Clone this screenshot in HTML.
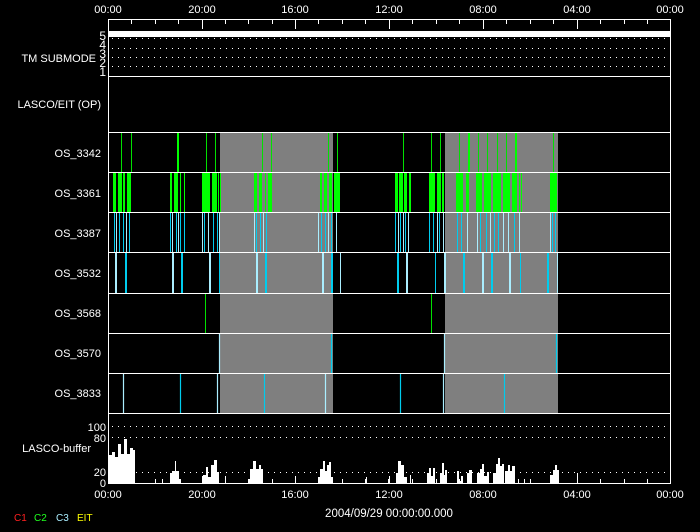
<!DOCTYPE html>
<html><head><meta charset="utf-8"><style>
html,body{margin:0;padding:0;background:#000;}
svg{display:block}
text{font-family:"Liberation Sans",sans-serif;font-size:11px;fill:#fff}
</style></head><body>
<svg width="700" height="532" viewBox="0 0 700 532" xmlns="http://www.w3.org/2000/svg">
<rect width="700" height="532" fill="#000"/>
<rect x="220" y="132" width="113" height="281" fill="#7f7f7f"/>
<rect x="445" y="132" width="113" height="281" fill="#7f7f7f"/>

<g text-anchor="middle" style="font-size:11.5px">
<text x="108" y="13">00:00</text><text x="202" y="13">20:00</text><text x="295" y="13">16:00</text>
<text x="389" y="13">12:00</text><text x="483" y="13">08:00</text><text x="577" y="13">04:00</text><text x="670" y="13">00:00</text>
<text x="108" y="498">00:00</text><text x="202" y="498">20:00</text><text x="295" y="498">16:00</text>
<text x="389" y="498">12:00</text><text x="483" y="498">08:00</text><text x="577" y="498">04:00</text><text x="670" y="498">00:00</text>
</g>
<g stroke="#fff" stroke-width="1">
<path d="M131.5 19v5M155.5 19v5M178.5 19v5M225.5 19v5M248.5 19v5M272.5 19v5M318.5 19v5M342.5 19v5M365.5 19v5M412.5 19v5M436.5 19v5M459.5 19v5M506.5 19v5M530.5 19v5M553.5 19v5M600.5 19v5M624.5 19v5M647.5 19v5"/>
<path d="M202.5 19v10M295.5 19v10M389.5 19v10M483.5 19v10M577.5 19v10"/>
<path d="M131.5 483v-4M155.5 483v-4M178.5 483v-4M202.5 483v-7M225.5 483v-4M248.5 483v-4M272.5 483v-4M295.5 483v-7M318.5 483v-4M342.5 483v-4M365.5 483v-4M389.5 483v-7M412.5 483v-4M436.5 483v-4M459.5 483v-4M483.5 483v-7M506.5 483v-4M530.5 483v-4M553.5 483v-4M577.5 483v-7M600.5 483v-4M624.5 483v-4M647.5 483v-4"/>
</g>
<rect x="108" y="31" width="563" height="6" fill="#fff"/>
<g stroke="#fff" stroke-dasharray="1 5" stroke-width="1">
<path d="M112 38.5H670M112 48.5H670M112 57.5H670M112 66.5H670"/>
<path d="M112 426.5H670M112 437.5H670M112 472.5H670"/>
</g>
<g text-anchor="end" style="font-size:12px">
<text x="106" y="40" style="font-size:12px">5</text><text x="106" y="49" style="font-size:12px">4</text>
<text x="106" y="58" style="font-size:12px">3</text><text x="106" y="67" style="font-size:12px">2</text>
<text x="106" y="76" style="font-size:12px">1</text>
</g>
<g text-anchor="end" style="font-size:11.5px">
<text x="96" y="62">TM SUBMODE</text>
<text x="101" y="108">LASCO/EIT (OP)</text>
<text x="101" y="157">OS_3342</text><text x="101" y="197">OS_3361</text><text x="101" y="237">OS_3387</text>
<text x="101" y="277">OS_3532</text><text x="101" y="317">OS_3568</text><text x="101" y="357">OS_3570</text>
<text x="101" y="397">OS_3833</text>
<text x="91" y="452">LASCO-buffer</text>
<text x="106" y="431">100</text><text x="106" y="442">80</text><text x="106" y="476">20</text><text x="106" y="487">0</text>
</g>

<g stroke="#00e000" stroke-width="1">
<path d="M121.5 132v40M131.5 132v40M206.5 132v40M215.5 132v40M262.5 132v40M271.5 132v40M328.5 132v40M337.5 132v40M403.5 132v40M431.5 132v40M440.5 132v40M459.5 132v40M478.5 132v40M487.5 132v40M497.5 132v40M506.5 132v40M553.5 132v40M431.5 293v40M205.5 293v40"/>
</g>
<rect x="177" y="132" width="2" height="40" fill="#00ff00"/><rect x="468" y="132" width="2" height="40" fill="#00ff00"/><rect x="515" y="132" width="2" height="40" fill="#00ff00"/>
<g fill="#00ff00">
<rect x="113" y="172" width="3" height="40"/><rect x="118" y="172" width="4" height="40"/><rect x="123" y="172" width="2" height="40"/><rect x="127" y="172" width="4" height="40"/>
<rect x="170" y="172" width="2" height="40"/><rect x="174" y="172" width="4" height="40"/><rect x="180" y="172" width="1" height="40"/><rect x="184" y="172" width="1" height="40"/>
<rect x="202" y="172" width="8" height="40"/><rect x="212" y="172" width="5" height="40"/><rect x="218" y="172" width="1" height="40"/><rect x="220" y="172" width="1" height="40"/>
<rect x="254" y="172" width="3" height="40"/><rect x="259" y="172" width="3" height="40"/><rect x="265" y="172" width="1" height="40"/><rect x="268" y="172" width="4" height="40"/>
<rect x="320" y="172" width="2" height="40"/><rect x="324" y="172" width="3" height="40"/><rect x="329" y="172" width="3" height="40"/><rect x="334" y="172" width="6" height="40"/>
<rect x="395" y="172" width="3" height="40"/><rect x="399" y="172" width="4" height="40"/><rect x="404" y="172" width="3" height="40"/><rect x="409" y="172" width="2" height="40"/>
<rect x="429" y="172" width="6" height="40"/><rect x="437" y="172" width="4" height="40"/><rect x="442" y="172" width="2" height="40"/>
<rect x="456" y="172" width="7" height="40"/><rect x="466" y="172" width="3" height="40"/><rect x="476" y="172" width="6" height="40"/><rect x="484" y="172" width="7" height="40"/>
<rect x="493" y="172" width="8" height="40"/><rect x="503" y="172" width="7" height="40"/><rect x="512" y="172" width="5" height="40"/><rect x="519" y="172" width="1" height="40"/><rect x="521" y="172" width="1" height="40"/>
<rect x="550" y="172" width="7" height="40"/>
</g>
<g stroke-width="1">
<path stroke="#00ccee" d="M114.5 212v40M119.5 212v40M123.5 212v40M129.5 212v40M170.5 212v40M176.5 212v40M180.5 212v40M184.5 212v40M204.5 212v40M213.5 212v40M217.5 212v40M256.5 212v40M260.5 212v40M266.5 212v40M321.5 212v40M325.5 212v40M331.5 212v40M395.5 212v40M400.5 212v40M405.5 212v40M429.5 212v40M433.5 212v40M439.5 212v40M457.5 212v40M461.5 212v40M480.5 212v40M486.5 212v40M494.5 212v40M498.5 212v40M514.5 212v40M552.5 212v40M555.5 212v40"/>
<path stroke="#aaeeff" d="M116.5 212v40M126.5 212v40M172.5 212v40M178.5 212v40M202.5 212v40M208.5 212v40M219.5 212v40M254.5 212v40M263.5 212v40M318.5 212v40M328.5 212v40M336.5 212v40M398.5 212v40M403.5 212v40M408.5 212v40M437.5 212v40M443.5 212v40M467.5 212v40M477.5 212v40M490.5 212v40M503.5 212v40M508.5 212v40M519.5 212v40M550.5 212v40"/>
</g>
<g>
<g fill="#aaeeff"><rect x="115" y="252" width="2" height="41"/><rect x="172" y="252" width="2" height="41"/><rect x="209" y="252" width="2" height="41"/><rect x="256" y="252" width="2" height="41"/><rect x="322" y="252" width="2" height="41"/><rect x="406" y="252" width="2" height="41"/><rect x="444" y="252" width="2" height="41"/><rect x="482" y="252" width="2" height="41"/><rect x="509" y="252" width="2" height="41"/><rect x="557" y="252" width="1" height="41"/><rect x="340" y="252" width="1" height="41"/></g>
<g fill="#00ccee"><rect x="125" y="252" width="2" height="41"/><rect x="181" y="252" width="2" height="41"/><rect x="219" y="252" width="1" height="41"/><rect x="265" y="252" width="2" height="41"/><rect x="331" y="252" width="2" height="41"/><rect x="397" y="252" width="2" height="41"/><rect x="435" y="252" width="1" height="41"/><rect x="463" y="252" width="2" height="41"/><rect x="491" y="252" width="2" height="41"/><rect x="520" y="252" width="1" height="41"/><rect x="547" y="252" width="2" height="41"/></g>
</g>
<g stroke-width="1.2">
<path stroke="#aaeeff" d="M219.5 333v40M444.5 333v40M123.5 373v40M217.5 373v40M325.5 373v40M443.5 373v40"/>
<path stroke="#00ccee" d="M331.5 333v40M556.5 333v40M180.5 373v40M264.5 373v40M400.5 373v40M504.5 373v40"/>
</g>

<g fill="#fff">
<path d="M108 483V455h4v-3h3v5h3v-13h3v10h3v-15h3v15h3v-6h3v2h2V483z"/>
<path d="M162 483v-4h1v4zM170 483v-10h2v-2h3v-10h1v10h3v8h2V483z"/>
<path d="M203 483v-8h3v-8h2v10h3v-12h3v-5h3v12h2V483z"/>
<path d="M248 483v-4h2v-10h3v-8h3v8h3v-4h2v4h2V483zM262 483v-5h1v5zM225 483v-7h1v7z"/>
<path d="M318 483v-6h2v-8h3v-8h2v10h2v-6h2v-3h2v15h2V483z"/>
<path d="M366 483v-6h1v6zM388 483v-4h1v4z"/>
<path d="M396 483v-10h2v-12h3v4h3v12h3V483zM410 483v-8h1v8z"/>
<path d="M427 483v-10h2v-5h2v8h2v-8h2V483z"/>
<path d="M440 483v-10h2v-10h2v12h1v-5h2V483z"/>
<path d="M457 483v-12h2v10h2v-5h2V483zM467 483v-10h2v-3h3V483z"/>
<path d="M477 483v-10h3v-4h2v-5h2v12h3v-4h2V483z"/>
<path d="M493 483v-10h3v-9h2v-6h2v8h2v-2h2V483z"/>
<path d="M505 483v-12h3v-6h2v6h2v-5h3v17h3v-4h1V483z"/>
<path d="M524 483v-4h1v4zM552 483v-8h1v8z"/>
<path d="M550 483v-8h3v-5h2v-5h2v5h2V483z"/>
<path d="M577 483v-10h1v10zM600 483v-4h1v4zM624 483v-4h1v4zM647 483v-4h1v4z"/>
</g>
<line x1="108" y1="483.5" x2="671" y2="483.5" stroke="#e00000" stroke-width="1"/>

<g stroke="#fff" stroke-width="1" fill="none">
<rect x="108.5" y="19.5" width="562" height="464"/>
<path d="M108 76.5H671M108 132.5H671M108 172.5H671M108 212.5H671M108 252.5H671M108 293.5H671M108 333.5H671M108 373.5H671M108 413.5H671"/>
</g>

<text x="389" y="517" text-anchor="middle" style="font-size:11.5px">2004/09/29 00:00:00.000</text>
<text x="14" y="521" style="fill:#ff2020;font-size:10px">C1</text>
<text x="34" y="521" style="fill:#20ff20;font-size:10px">C2</text>
<text x="56" y="521" style="fill:#aaeeff;font-size:10px">C3</text>
<text x="77" y="521" style="fill:#ffff00;font-size:10px">EIT</text>
</svg>
</body></html>
